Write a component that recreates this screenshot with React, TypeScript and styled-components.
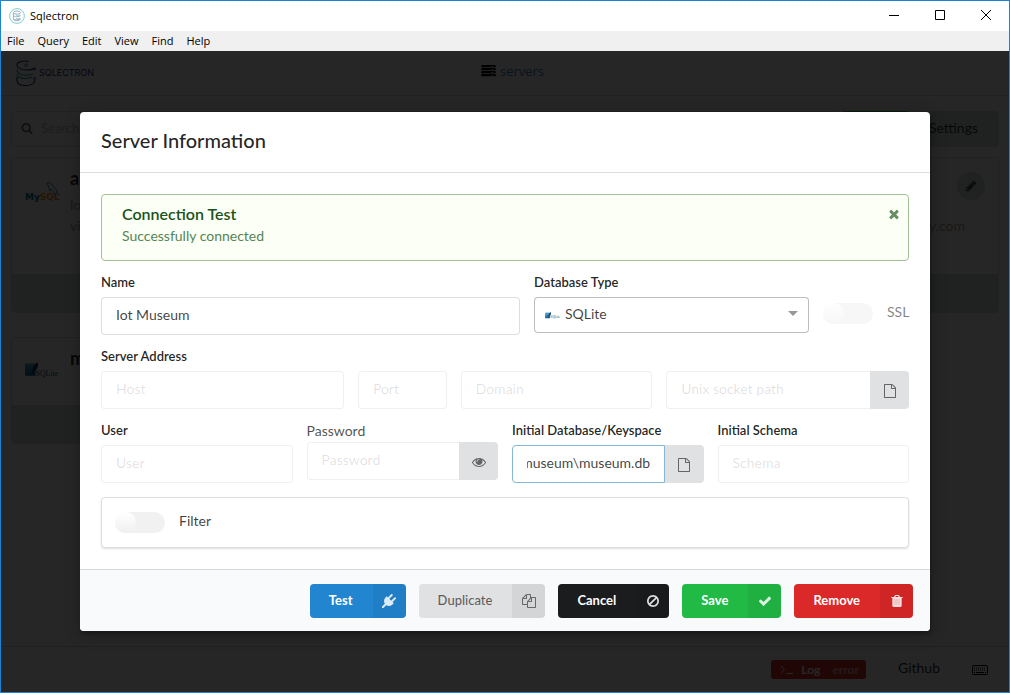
import React, { useEffect, useRef } from "react";
import styled, { createGlobalStyle, css } from "styled-components";

const GlobalStyle = createGlobalStyle`
  *, *::before, *::after { box-sizing: border-box; }
  body {
    margin: 0;
    font-family: Lato, "Liberation Sans", sans-serif;
    font-size: 14px;
    line-height: 18px;
    color: rgba(0, 0, 0, 0.87);
  }
  button, input, select { font: inherit; color: inherit; }
`;

/* ---------- icons ---------- */

const paths = {
  search:
    "M1216 832q0-185-131.5-316.5t-316.5-131.5-316.5 131.5-131.5 316.5 131.5 316.5 316.5 131.5 316.5-131.5 131.5-316.5zm512 832q0 52-38 90t-90 38q-54 0-90-38l-343-342q-179 124-399 124-143 0-273.5-55.5t-225-150-150-225-55.5-273.5 55.5-273.5 150-225 225-150 273.5-55.5 273.5 55.5 225 150 150 225 55.5 273.5q0 220-124 399l343 343q37 37 37 90z",
  pencil:
    "M491 1536l91-91-235-235-91 91v107h128v128h107zm523-928q0-22-22-22-10 0-17 7l-542 542q-7 7-7 17 0 22 22 22 10 0 17-7l542-542q7-7 7-17zm-54-192l416 416-832 832h-416v-416zm683 96q0 53-37 90l-166 166-416-416 166-165q36-38 90-38 53 0 91 38l235 234q37 39 37 91z",
  close:
    "M1490 1322q0 40-28 68l-136 136q-28 28-68 28t-68-28l-294-294-294 294q-28 28-68 28t-68-28l-136-136q-28-28-28-68t28-68l294-294-294-294q-28-28-28-68t28-68l136-136q28-28 68-28t68 28l294 294 294-294q28-28 68-28t68 28l136 136q28 28 28 68t-28 68l-294 294 294 294q28 28 28 68z",
  file:
    "M1596 380q28 28 48 76t20 88v1152q0 40-28 68t-68 28h-1344q-40 0-68-28t-28-68v-1600q0-40 28-68t68-28h896q40 0 88 20t76 48zm-444-244v376h376q-10-29-22-41l-313-313q-12-12-41-22zm384 1528v-1024h-416q-40 0-68-28t-28-68v-416h-768v1536h1280z",
  eye:
    "M1664 960q-152-236-381-353 61 104 61 225 0 185-131.5 316.5t-316.5 131.5-316.5-131.5-131.5-316.5q0-121 61-225-229 117-381 353 133 205 333.5 326.5t434.5 121.5 434.5-121.5 333.5-326.5zm-720-384q0-20-14-34t-34-14q-125 0-214.5 89.5t-89.5 214.5q0 20 14 34t34 14 34-14 14-34q0-86 61-147t147-61q20 0 34-14t14-34zm848 384q0 34-20 69-140 230-376.5 368.5t-499.5 138.5-499.5-139-376.5-368q-20-35-20-69t20-69q140-229 376.5-368t499.5-139 499.5 139 376.5 368q20 35 20 69z",
  plug:
    "M1755 453q37 38 37 90.5t-37 90.5l-401 400 150 150-160 160q-163 163-389.5 186.5t-411.5-100.5l-362 362h-181v-181l362-362q-124-185-100.5-411.5t186.5-389.5l160-160 150 150 400-401q38-37 91-37t90 37 37 90.5-37 90.5l-400 401 234 234 401-400q38-37 91-37t90 37z",
  copy:
    "M1696 384q40 0 68 28t28 68v1216q0 40-28 68t-68 28h-960q-40 0-68-28t-28-68v-288h-544q-40 0-68-28t-28-68v-672q0-40 20-88t48-76l408-408q28-28 76-48t88-20h416q40 0 68 28t28 68v328q68-40 128-40h416zm-544 213l-299 299h299v-299zm-640-384l-299 299h299v-299zm196 647l316-316v-416h-384v416q0 40-28 68t-68 28h-416v640h512v-256q0-40 20-88t48-76zm956 804v-1152h-384v416q0 40-28 68t-68 28h-416v640h896z",
  ban:
    "M1440 893q0-161-87-295l-754 753q137 89 297 89 111 0 211.5-43.5t173.5-116.5 116-174.5 43-212.5zm-999 299l755-754q-135-91-300-91-148 0-273 73t-198 199-73 274q0 162 89 299zm1223-299q0 157-61 300t-163.5 246-245 164-298.5 61-298.5-61-245-164-163.5-246-61-300 61-299.5 163.5-245.5 245-164 298.5-61 298.5 61 245 164 163.5 245.5 61 299.5z",
  check:
    "M1671 566q0 40-28 68l-724 724-136 136q-28 28-68 28t-68-28l-136-136-362-362q-28-28-28-68t28-68l136-136q28-28 68-28t68 28l294 295 656-657q28-28 68-28t68 28l136 136q28 28 28 68z",
  trash:
    "M704 1376v-704q0-14-9-23t-23-9h-64q-14 0-23 9t-9 23v704q0 14 9 23t23 9h64q14 0 23-9t9-23zm256 0v-704q0-14-9-23t-23-9h-64q-14 0-23 9t-9 23v704q0 14 9 23t23 9h64q14 0 23-9t9-23zm256 0v-704q0-14-9-23t-23-9h-64q-14 0-23 9t-9 23v704q0 14 9 23t23 9h64q14 0 23-9t9-23zm-544-992h448l-48-117q-7-9-17-11h-317q-10 2-17 11zm928 32v64q0 14-9 23t-23 9h-96v948q0 83-47 143.5t-113 60.5h-832q-66 0-113-58.5t-47-141.5v-952h-96q-14 0-23-9t-9-23v-64q0-14 9-23t23-9h309l70-167q15-37 54-63t79-26h320q40 0 79 26t54 63l70 167h309q14 0 23 9t9 23z",
};

const solidTrash =
  "M1600 416v64q0 14-9 23t-23 9h-96v948q0 83-47 143.500t-113 60.500h-832q-66 0-113-58.500t-47-141.500v-952h-96q-14 0-23-9t-9-23v-64q0-14 9-23t23-9h309l70-167q15-37 54-63t79-26h320q40 0 79 26t54 63l70 167h309q14 0 23 9t9 23zm-928-32h448l-48-117q-7-9-17-11h-317q-10 2-17 11z";

const Glyph = styled.svg`
  display: block;
  flex: none;
  fill: currentColor;
`;

type IconName = keyof typeof paths;

const Icon = ({ name, size = 14 }: { name: IconName; size?: number }) => (
  <Glyph width={size} height={size} viewBox="0 0 1792 1792" aria-hidden="true">
    <path d={paths[name]} />
    {name === "trash" && <path d={solidTrash} fillRule="evenodd" opacity="0.75" />}
  </Glyph>
);

const AppIcon = () => (
  <svg width="16" height="16" viewBox="0 0 16 16" fill="none" aria-hidden="true">
    <circle cx="8" cy="8" r="7.4" stroke="#7fcfca" />
    <ellipse cx="8" cy="4.6" rx="3.6" ry="1.5" stroke="#8c95b5" strokeWidth="0.8" />
    <path d="M4.400 5v2.200c0 2 6.200 2 7.200 0M4.400 8v2.200c0 2 6.200 2 7.200 0M4.400 11c0 2.400 6.200 2.400 7.200 0" stroke="#8c95b5" strokeWidth="0.8" />
    <path d="M7 7.300c2 .4 3 .2 4.200-.6M7 10.400c2 .4 3 .2 4.200-.6" stroke="#7fcfca" strokeWidth="0.8" />
  </svg>
);

const BrandMark = () => (
  <svg width="20" height="27" viewBox="0 0 20 27" fill="none" aria-hidden="true">
    <path d="M13 1.500C7 .2 1 2 1 5s4 5 9 5 8-1 8.500-2.500" stroke="#2b2f63" strokeWidth="1.1" />
    <path d="M1 9.500c0 6 9 6.500 16 4.500M1 14c0 4 9 6 15 3" stroke="#36a38f" strokeWidth="1.1" />
    <path d="M1 17v3.500c0 6 13 7 17.500 1.500V20" stroke="#2b2f63" strokeWidth="1.1" />
    <circle cx="10" cy="5" r="1.3" stroke="#36a38f" />
    <circle cx="18.5" cy="9" r="1" stroke="#2b2f63" />
    <circle cx="18.5" cy="18.5" r="1" stroke="#2b2f63" />
  </svg>
);

const ServerGlyph = () => (
  <Glyph width="15" height="12" viewBox="0 0 15 12" aria-hidden="true">
    {[0, 3, 6, 9].map((y) => (
      <path key={y} fillRule="evenodd" d={`M1 ${y}h13l1 1v.6l-1 .6h-13l-1-.6v-.6zM10 ${y + 1}h3v.5h-3z`} />
    ))}
  </Glyph>
);

const KeyboardGlyph = () => (
  <svg width="16" height="10" viewBox="0 0 16 10" fill="none" stroke="#000" aria-hidden="true">
    <rect x="0.5" y="0.5" width="15" height="9" rx="1" />
    <path d="M2 3h12M2 5h12" strokeDasharray="1 1" />
    <path d="M2 7.500h1M4 7.500h8M13 7.500h1" />
  </svg>
);

const MySqlLogo = () => (
  <svg width="35" height="20" viewBox="0 0 35 20" role="img" aria-label="MySQL">
    <text x="0" y="18" fontFamily="DejaVu Sans, sans-serif" fontSize="9" fontWeight="700" fill="#00758f">
      My<tspan fill="#f29111">SQL</tspan>
    </text>
    <path d="M22 1c3-1 5 1 6 3 2 2 4 4 4 7l3 2M22 1c0 2 2 2 2 5l1 3 1-2c2 1 3 4 4 6" fill="none" stroke="#00758f" strokeWidth="0.8" />
  </svg>
);

const SqliteLogo = ({ width }: { width: number }) => (
  <svg width={width} height={Math.round(width * 0.45)} viewBox="0 0 36 16" role="img" aria-label="SQLite logo">
    <defs>
      <linearGradient id="sqlite-fill" x1="0" y1="0" x2="0" y2="1">
        <stop offset="0" stopColor="#5fb4e0" />
        <stop offset="1" stopColor="#0b5c94" />
      </linearGradient>
    </defs>
    <rect x="0" y="1" width="11" height="13" rx="1" fill="url(#sqlite-fill)" />
    <path d="M13 0c-4 2-6 7-6 14 1-3 2-4 3-5 3-2 4-6 3-9z" fill="#0a3d5c" />
    <text x="11" y="14" fontFamily="Liberation Serif, serif" fontSize="8" fill="#0a5f87">
      SQLite
    </text>
  </svg>
);

/* ---------- window frame ---------- */

const Window = styled.div`
  display: flex;
  flex-direction: column;
  min-height: 100vh;
  border: 1px solid #1883d7;
  background: #fff;
`;

const TitleBar = styled.header`
  display: flex;
  align-items: center;
  height: 30px;
  padding-left: 8px;
  gap: 5px;
  font: 11px/16px "Open Sans", "Noto Sans", sans-serif;
  color: #000;
`;

const WindowTitle = styled.span`
  flex: 1;
`;

const WindowControls = styled.div`
  display: flex;
  align-self: stretch;
`;

const WindowButton = styled.button`
  display: grid;
  place-items: center;
  width: 46px;
  padding: 0 0 2px;
  border: 0;
  background: none;
`;

const MenuBar = styled.nav`
  display: flex;
  align-items: center;
  height: 20px;
  padding-left: 6px;
  gap: 13px;
  background: #f0f0f0;
`;

const MenuItem = styled.button`
  padding: 0;
  border: 0;
  background: none;
  font: 11px/16px "Open Sans", "Noto Sans", sans-serif;
  color: #000;
`;

/* ---------- page behind the dialog ---------- */

const Workspace = styled.div`
  position: relative;
  display: flex;
  flex: 1;
  flex-direction: column;
`;

const AppBar = styled.div`
  display: grid;
  grid-template-columns: 1fr auto 1fr;
  align-items: center;
  height: 45px;
  padding-left: 15px;
  border-bottom: 1px solid rgba(34, 36, 38, 0.15);
`;

const Brand = styled.div`
  display: flex;
  align-items: center;
  gap: 3px;
  font: 9px/12px Inter, sans-serif;
  color: #2b2f63;
`;

const ServersLink = styled.a`
  display: flex;
  align-items: center;
  gap: 4px;
  padding-bottom: 4px;
  font: 13px/18px "Open Sans", sans-serif;
  color: #4183c4;
  text-decoration: none;

  svg { color: #000; }
`;

const Page = styled.main`
  display: flex;
  flex: 1;
  flex-direction: column;
  gap: 10px;
  padding: 15px 10px;
`;

const Toolbar = styled.div`
  display: flex;
  height: 36px;
`;

const SearchBox = styled.label`
  display: flex;
  flex: 1;
  align-items: center;
  gap: 6px;
  padding: 0 0 2px 9px;
  border: 1px solid rgba(34, 36, 38, 0.15);
  border-radius: 4px;
  color: rgba(0, 0, 0, 0.6);
`;

const SearchInput = styled.input`
  flex: 1;
  border: 0;
  outline: 0;
  background: none;
  font-size: 13px;
  &::placeholder { color: rgba(80, 80, 80, 0.4); }
`;

const ToolbarButton = styled.button<{ $positive?: boolean }>`
  padding: 0 21px 2px;
  border: 0;
  border-radius: ${(p) => (p.$positive ? "4px 0 0 4px" : "0 4px 4px 0")};
  background: ${(p) => (p.$positive ? "#21ba45" : "#cfe3dc")};
  color: ${(p) => (p.$positive ? "#fff" : "rgba(0, 0, 0, 0.8)")};
`;

const Cards = styled.div`
  display: grid;
  grid-template-columns: 1fr 1fr;
  align-items: start;
  gap: 24px 14px;
`;

const Card = styled.article`
  border: 1px solid rgba(34, 36, 38, 0.15);
  border-radius: 4px;
`;

const CardBody = styled.div<{ $tall?: boolean }>`
  display: flex;
  align-items: flex-start;
  gap: 10px;
  min-height: ${(p) => (p.$tall ? 116 : 67)}px;
  padding: 11px 13px;
`;

const CardLogo = styled.div`
  padding-top: 13px;
`;

const CardText = styled.div`
  flex: 1;
  line-height: 21px;
  color: rgba(0, 0, 0, 0.4);
`;

const CardTitle = styled.h2`
  margin: 0 0 7px;
  font-size: 18px;
  line-height: 18px;
  color: rgba(0, 0, 0, 0.85);
`;

const CardAddress = styled.p`
  flex: 1;
  margin: 46px 0 0;
  padding-right: 20px;
  text-align: right;
  line-height: 21px;
  color: rgba(0, 0, 0, 0.4);
`;

const EditButton = styled.button`
  display: grid;
  place-items: center;
  width: 28px;
  height: 28px;
  margin-top: 3px;
  margin-left: -38px;
  padding: 0;
  border: 0;
  border-radius: 50%;
  background: #cfe3dc;
  color: rgba(0, 0, 0, 0.7);
`;

const CardFooter = styled.div`
  height: 38px;
  margin: 0 -1px;
  background: #cfe3dc;
  border-radius: 0 0 4px 4px;
`;

const StatusBar = styled.footer`
  display: flex;
  align-items: center;
  justify-content: flex-end;
  height: 46px;
  padding-right: 21px;
  gap: 32px;
  border-top: 1px solid rgba(34, 36, 38, 0.15);
`;

const LogButton = styled.button`
  display: flex;
  align-items: center;
  gap: 8px;
  height: 19px;
  padding: 0 7px 0 9px;
  border: 0;
  border-radius: 3px;
  background: #db2828;
  font-size: 12px;
  font-weight: 700;
  color: #fff;

  em { margin-left: 4px; font-style: normal; opacity: 0.6; }
`;

const FooterLink = styled.a`
  padding-bottom: 4px;
  color: rgba(0, 0, 0, 0.87);
  text-decoration: none;
`;

/* ---------- dialog ---------- */

const Dimmer = styled.div`
  position: absolute;
  inset: 0;
  display: flex;
  align-items: flex-start;
  justify-content: center;
  padding: 61px 20px 20px;
  background: rgba(0, 0, 0, 0.85);
`;

const Dialog = styled.section`
  width: 100%;
  max-width: 850px;
  border-radius: 4px;
  overflow: hidden;
  background: #fff;
  box-shadow: 1px 3px 3px rgba(0, 0, 0, 0.2), 1px 3px 15px 2px rgba(0, 0, 0, 0.2);
`;

const DialogHeader = styled.h1`
  margin: 0;
  padding: 15px 21px 19px;
  border-bottom: 1px solid rgba(34, 36, 38, 0.15);
  font-size: 20px;
  font-weight: 500;
  line-height: 26px;
`;

const DialogContent = styled.form`
  padding: 21px;
`;

const Message = styled.div`
  display: flex;
  align-items: flex-start;
  justify-content: space-between;
  margin-bottom: 14px;
  padding: 10px 7px 14px 20px;
  border: 1px solid #a3c293;
  border-radius: 4px;
  background: #fcfff5;
  color: #2c662d;

  p { margin: 0; line-height: 21px; opacity: 0.8; }
`;

const MessageTitle = styled.h2`
  margin: 0 0 2px;
  font-size: 16px;
  font-weight: 600;
  line-height: 18px;
  color: #1a531b;
`;

const CloseButton = styled.button`
  margin-top: 2px;
  padding: 0;
  border: 0;
  background: none;
  color: #1a531b;
  opacity: 0.65;
`;

const Row = styled.div<{ $columns: string }>`
  display: grid;
  grid-template-columns: ${(p) => p.$columns};
  align-items: start;
  gap: 0 14px;
  margin-bottom: 14px;
`;

const Field = styled.div<{ $span?: number }>`
  min-width: 0;
  ${(p) => p.$span && css`grid-column: span ${p.$span};`}
`;

const Label = styled.label`
  display: block;
  margin-bottom: 8px;
  font-size: 13px;
  font-weight: 600;
  line-height: 14px;
  color: rgba(0, 0, 0, 0.87);
`;

const PlainLabel = styled(Label)`
  margin-bottom: 3px;
  font-size: 14px;
  font-weight: 400;
  line-height: 16px;
  color: rgba(0, 0, 0, 0.7);
`;

const InputGroup = styled.div`
  display: flex;
`;

const TextInput = styled.input<{ $joined?: boolean; $active?: boolean }>`
  flex: 1;
  width: 100%;
  min-width: 0;
  height: 38px;
  padding: 0 14px 3px;
  border: 1px solid ${(p) => (p.$active ? "#85b7d9" : "rgba(34, 36, 38, 0.15)")};
  border-radius: ${(p) => (p.$joined ? "4px 0 0 4px" : "4px")};
  ${(p) => p.$joined && !p.$active && css`border-right: 0;`}
  outline: 0;
  background: #fff;
  color: rgba(0, 0, 0, 0.75);

  &:disabled { border-color: rgba(34, 36, 38, 0.07); }
  &:disabled::placeholder { color: rgba(0, 0, 0, 0.12); }
`;

const Addon = styled.button`
  display: grid;
  place-items: center;
  width: 39px;
  height: 38px;
  padding: 2px 0 0;
  border: 0;
  border-radius: 0 4px 4px 0;
  background: #e0e1e2;
  color: rgba(0, 0, 0, 0.55);
`;

const SelectBox = styled.div`
  display: grid;
  grid-template-columns: 1fr;
  align-items: center;

  > * { grid-area: 1 / 1; }
  > svg { z-index: 1; pointer-events: none; }
`;

const Select = styled.select`
  width: 100%;
  height: 36px;
  padding: 0 30px 2px 30px;
  border: 1px solid rgba(34, 36, 38, 0.3);
  border-radius: 4px;
  appearance: none;
  background: #fff;
  color: rgba(0, 0, 0, 0.75);
`;

const OptionLogo = styled.span`
  z-index: 1;
  display: flex;
  margin-left: 11px;
  pointer-events: none;
`;

const Caret = styled.svg`
  justify-self: end;
  margin: 0 11px 4px 0;
`;

const ToggleLabel = styled.label<{ $disabled?: boolean }>`
  display: flex;
  align-items: center;
  gap: 14px;
  color: rgba(0, 0, 0, ${(p) => (p.$disabled ? 0.5 : 0.75)});
`;

const SslField = styled.div`
  padding-top: 28px;
`;

const Toggle = styled.input`
  appearance: none;
  flex: none;
  width: 50px;
  height: 21px;
  margin: 0;
  border-radius: 11px;
  background: #f1f1f1;

  &::before {
    content: "";
    display: block;
    width: 21px;
    height: 21px;
    border-radius: 50%;
    background: linear-gradient(#fff, #f0f0f0);
  }
  &:disabled { opacity: 0.5; }
`;

const ToggleText = styled.span`
  padding-bottom: 3px;
`;

const Segment = styled.div`
  padding: 14px 14px 14px 13px;
  border: 1px solid rgba(34, 36, 38, 0.15);
  border-radius: 4px;
  box-shadow: 0 1px 2px rgba(34, 36, 38, 0.15);
`;

const Actions = styled.div`
  display: flex;
  justify-content: flex-end;
  gap: 13px;
  padding: 14px 17px 13px;
  border-top: 1px solid rgba(34, 36, 38, 0.15);
  background: #f9fafb;
`;

const ActionButton = styled.button<{ $bg: string; $muted?: boolean }>`
  display: flex;
  align-items: stretch;
  height: 34px;
  padding: 0;
  border: 0;
  border-radius: 4px;
  overflow: hidden;
  background: ${(p) => p.$bg};
  color: ${(p) => (p.$muted ? "rgba(0, 0, 0, 0.6)" : "#fff")};
  font-size: 13px;
  font-weight: ${(p) => (p.$muted ? 500 : 700)};
  line-height: 32px;
`;

const ActionText = styled.span`
  padding: 0 20px 0 19px;
`;

const ActionIcon = styled.span`
  display: grid;
  place-items: center;
  width: 33px;
  background: rgba(0, 0, 0, 0.05);

  svg { opacity: 0.85; }
`;

type ActionProps = { label: string; icon: IconName; bg: string; muted?: boolean };

const Action = ({ label, icon, bg, muted }: ActionProps) => (
  <ActionButton type="button" $bg={bg} $muted={muted}>
    <ActionText>{label}</ActionText>
    <ActionIcon>
      <Icon name={icon} />
    </ActionIcon>
  </ActionButton>
);

const sixteen = "repeat(16, minmax(0, 1fr))";

const ServerDialog = () => {
  const database = useRef<HTMLInputElement>(null);

  // Long paths are shown from their end, where the file name is.
  useEffect(() => {
    if (database.current) database.current.scrollLeft = database.current.scrollWidth;
  }, []);

  return (
    <Dialog role="dialog" aria-labelledby="dialog-title">
      <DialogHeader id="dialog-title">Server Information</DialogHeader>
      <DialogContent>
        <Message role="status">
          <div>
            <MessageTitle>Connection Test</MessageTitle>
            <p>Successfully connected</p>
          </div>
          <CloseButton type="button" aria-label="Close message">
            <Icon name="close" />
          </CloseButton>
        </Message>

        <Row $columns="minmax(0, 32fr) minmax(0, 21fr) 86px">
          <Field>
            <Label htmlFor="name">Name</Label>
            <TextInput id="name" defaultValue="Iot Museum" />
          </Field>
          <Field>
            <Label htmlFor="type">Database Type</Label>
            <SelectBox>
              <Select id="type" defaultValue="sqlite">
                <option value="sqlite">SQLite</option>
              </Select>
              <OptionLogo>
                <SqliteLogo width={16} />
              </OptionLogo>
              <Caret width="10" height="5" viewBox="0 0 10 5" aria-hidden="true">
                <path d="M0 0h10l-5 5z" fill="#999" />
              </Caret>
            </SelectBox>
          </Field>
          <SslField>
            <ToggleLabel $disabled>
              <Toggle type="checkbox" disabled />
              <ToggleText>SSL</ToggleText>
            </ToggleLabel>
          </SslField>
        </Row>

        <Label htmlFor="host">Server Address</Label>
        <Row $columns={sixteen}>
          <Field $span={5}>
            <TextInput id="host" placeholder="Host" disabled />
          </Field>
          <Field $span={2}>
            <TextInput aria-label="Port" placeholder="Port" disabled />
          </Field>
          <Field $span={4}>
            <TextInput aria-label="Domain" placeholder="Domain" disabled />
          </Field>
          <Field $span={5}>
            <InputGroup>
              <TextInput aria-label="Unix socket path" placeholder="Unix socket path" disabled $joined />
              <Addon type="button" aria-label="Choose socket file">
                <Icon name="file" />
              </Addon>
            </InputGroup>
          </Field>
        </Row>

        <Row $columns={sixteen}>
          <Field $span={4}>
            <Label htmlFor="user">User</Label>
            <TextInput id="user" placeholder="User" disabled />
          </Field>
          <Field $span={4}>
            <PlainLabel htmlFor="password">Password</PlainLabel>
            <InputGroup>
              <TextInput id="password" type="password" placeholder="Password" disabled $joined />
              <Addon type="button" aria-label="Show password">
                <Icon name="eye" />
              </Addon>
            </InputGroup>
          </Field>
          <Field $span={4}>
            <Label htmlFor="database">Initial Database/Keyspace</Label>
            <InputGroup>
              <TextInput id="database" ref={database} defaultValue="C:\museum\museum.db" $joined $active />
              <Addon type="button" aria-label="Choose database file">
                <Icon name="file" />
              </Addon>
            </InputGroup>
          </Field>
          <Field $span={4}>
            <Label htmlFor="schema">Initial Schema</Label>
            <TextInput id="schema" placeholder="Schema" disabled />
          </Field>
        </Row>

        <Segment>
          <ToggleLabel>
            <Toggle type="checkbox" />
            <ToggleText>Filter</ToggleText>
          </ToggleLabel>
        </Segment>
      </DialogContent>
      <Actions>
        <Action label="Test" icon="plug" bg="#2185d0" />
        <Action label="Duplicate" icon="copy" bg="#e0e1e2" muted />
        <Action label="Cancel" icon="ban" bg="#1b1c1d" />
        <Action label="Save" icon="check" bg="#21ba45" />
        <Action label="Remove" icon="trash" bg="#db2828" />
      </Actions>
    </Dialog>
  );
};

export default function App() {
  return (
    <Window>
      <GlobalStyle />
      <TitleBar>
        <AppIcon />
        <WindowTitle>Sqlectron</WindowTitle>
        <WindowControls>
          <WindowButton aria-label="Minimize">
            <svg width="10" height="11" stroke="#000"><path d="M0 5.500h10" /></svg>
          </WindowButton>
          <WindowButton aria-label="Maximize">
            <svg width="10" height="10" stroke="#000" fill="none"><path d="M.5.5h9v9h-9z" /></svg>
          </WindowButton>
          <WindowButton aria-label="Close">
            <svg width="10" height="10" stroke="#000"><path d="M0 0l10 10M10 0l-10 10" /></svg>
          </WindowButton>
        </WindowControls>
      </TitleBar>
      <MenuBar>
        {["File", "Query", "Edit", "View", "Find", "Help"].map((item) => (
          <MenuItem key={item}>{item}</MenuItem>
        ))}
      </MenuBar>

      <Workspace>
        <AppBar>
          <Brand>
            <BrandMark />
            SQLECTRON
          </Brand>
          <ServersLink href="#servers">
            <ServerGlyph />
            servers
          </ServersLink>
        </AppBar>
        <Page>
          <Toolbar>
            <SearchBox>
              <Icon name="search" size={12} />
              <SearchInput type="search" placeholder="Search..." aria-label="Search" />
            </SearchBox>
            <ToolbarButton $positive>Add</ToolbarButton>
            <ToolbarButton>Settings</ToolbarButton>
          </Toolbar>
          <Cards>
            <Card>
              <CardBody $tall>
                <CardLogo><MySqlLogo /></CardLogo>
                <CardText>
                  <CardTitle>a</CardTitle>
                  <div>lo</div>
                  <div>vi</div>
                </CardText>
              </CardBody>
              <CardFooter />
            </Card>
            <Card>
              <CardBody $tall>
                <CardAddress>y.com</CardAddress>
                <EditButton aria-label="Edit server"><Icon name="pencil" size={12} /></EditButton>
              </CardBody>
              <CardFooter />
            </Card>
            <Card>
              <CardBody>
                <CardLogo><SqliteLogo width={35} /></CardLogo>
                <CardText>
                  <CardTitle>m</CardTitle>
                </CardText>
              </CardBody>
              <CardFooter />
            </Card>
          </Cards>
        </Page>
        <StatusBar>
          <LogButton>
            <svg width="13" height="9" fill="none" stroke="currentColor" aria-hidden="true">
              <path d="M1 1l3.500 3.500L1 8M6 8.500h7" />
            </svg>
            <span>Log</span>
            <em>error</em>
          </LogButton>
          <FooterLink href="#github">Github</FooterLink>
          <KeyboardGlyph />
        </StatusBar>
        <Dimmer>
          <ServerDialog />
        </Dimmer>
      </Workspace>
    </Window>
  );
}
